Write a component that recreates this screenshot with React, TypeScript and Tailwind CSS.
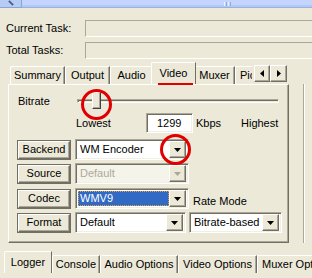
import React from "react";

const raised =
  "border border-t-white border-l-white border-r-[#716f64] border-b-[#716f64] shadow-[inset_-1px_-1px_0_#aca899]";
const sunken =
  "border border-t-[#aca899] border-l-[#aca899] border-r-white border-b-white shadow-[inset_1px_1px_0_#716f64,inset_-1px_-1px_0_#f1efe2]";

function Arrow({ disabled }: { disabled?: boolean }) {
  return (
    <svg width="7" height="4" viewBox="0 0 7 4">
      <polygon points="0,0 7,0 3.5,4" fill={disabled ? "#aca899" : "#000"} />
    </svg>
  );
}

function Combo({
  text,
  w,
  disabled,
  selected,
}: {
  text: string;
  w: string;
  disabled?: boolean;
  selected?: boolean;
}) {
  return (
    <div className={`${sunken} ${w} h-[21px] flex items-center pl-[2px] pr-[2px] ${disabled ? "bg-[#f5f4ea]" : "bg-white"}`}>
      <div className="flex-1 h-[15px] flex items-center min-w-0">
        {selected ? (
          <span className="h-[15px] w-full bg-[#316ac5] text-white flex items-center pl-[2px] outline-1 outline-dotted outline-[#f0a030] -outline-offset-1">
            {text}
          </span>
        ) : (
          <span className={`pl-[2px] whitespace-nowrap ${disabled ? "text-[#aca899]" : "text-black"}`}>{text}</span>
        )}
      </div>
      <div className={`${raised} bg-[#ece9d8] w-[17px] h-[17px] flex items-center justify-center shrink-0`}>
        <Arrow disabled={disabled} />
      </div>
    </div>
  );
}

function Btn({ text }: { text: string }) {
  return (
    <div className="w-[54px] h-[20px] border border-[#716f64] shrink-0">
      <div className={`${raised} w-full h-full bg-[#ece9d8] flex items-center justify-center`}>
        {text}
      </div>
    </div>
  );
}

function Tab({ text, w, selected }: { text: string; w: string; selected?: boolean }) {
  return (
    <div
      className={`${w} shrink-0 bg-[#ece9d8] border-t border-l border-t-white border-l-white border-r border-r-[#716f64] rounded-tl-[2px] flex items-center justify-center overflow-hidden whitespace-nowrap ${
        selected ? "h-[22px] -mx-[2px] relative z-10" : "h-[18px] shadow-[inset_-1px_0_0_#aca899]"
      }`}
    >
      {text}
    </div>
  );
}

export default function App() {
  return (
    <div
      className="w-[312px] h-[278px] bg-[#ece9d8] overflow-hidden relative text-[11px] text-black leading-none"
      style={{ fontFamily: '"Liberation Sans", Arial, sans-serif' }}
    >
      {/* top scrollbar remnant */}
      <div className="h-[8px] flex">
        <div className="w-[22px] h-[8px] bg-[#b6cbf6] border-r border-b border-[#8aa4d8] flex items-start justify-center">
          <div className="w-[6px] h-[2px] mt-[2px] bg-[#4d6185] rotate-45" />
        </div>
        <div className="flex-1 h-[8px] bg-[#c3d5fd] border-b border-[#98b1e4] shadow-[inset_0_-2px_0_#b4c8f6] flex justify-center">
          <div className="ml-[120px] flex gap-[1px] items-end h-full pb-[1px]">
            <div className="w-[1px] h-[4px] bg-[#eef4fe]" />
            <div className="w-[1px] h-[4px] bg-[#8caae6]" />
            <div className="w-[1px] h-[4px] bg-[#eef4fe]" />
            <div className="w-[1px] h-[4px] bg-[#8caae6]" />
          </div>
        </div>
      </div>

      {/* Task rows */}
      <div className="flex items-center mt-[12px] h-[17px]">
        <span className="pl-[6px] w-[90px]">Current Task:</span>
        <div className="w-[240px] h-[17px] border-t border-l border-[#aca899] border-b border-b-white" />
      </div>
      <div className="flex items-center mt-[5px] h-[17px]">
        <span className="pl-[6px] w-[90px]">Total Tasks:</span>
        <div className="w-[240px] h-[17px] border-t border-l border-[#aca899] border-b border-b-white" />
      </div>

      {/* main tab control */}
      <div className="flex">
        <div className="ml-[8px] w-[281px] mt-[4px] relative">
          <div className="flex items-end h-[21px] pl-[2px] relative">
            <Tab text="Summary" w="w-[55px]" />
            <Tab text="Output" w="w-[45px]" />
            <Tab text="Audio" w="w-[43px]" />
            <Tab text="Video" w="w-[45px]" selected />
            <Tab text="Muxer" w="w-[41px]" />
            <div className="h-[18px] w-[17px] border-t border-l border-white pl-[4px] flex items-center overflow-hidden whitespace-nowrap">
              Pic
            </div>
            <div className="absolute right-[2px] top-[2px] flex">
              <div className={`${raised} bg-[#ece9d8] w-[16px] h-[17px] flex items-center justify-center`}>
                <svg width="4" height="7" viewBox="0 0 4 7"><polygon points="4,0 4,7 0,3.5" fill="#000" /></svg>
              </div>
              <div className={`${raised} bg-[#ece9d8] w-[17px] h-[17px] flex items-center justify-center`}>
                <svg width="4" height="7" viewBox="0 0 4 7"><polygon points="0,0 0,7 4,3.5" fill="#000" /></svg>
              </div>
            </div>
            {/* red underline under Video */}
            <div className="absolute left-[150px] top-[20px] w-[35px] h-[2px] bg-[#e00000] z-20" />
          </div>
          <div className={`${raised} h-[159px] flex flex-col`}>
            {/* bitrate row */}
            <div className="flex items-center h-[14px] mt-[9px]">
              <span className="pl-[9px] w-[68px]">Bitrate</span>
              <div className="flex-1 mr-[9px] h-[4px] border-t border-l border-[#aca899] border-b border-r border-b-white border-r-white shadow-[inset_1px_1px_0_#716f64] relative">
                <div className="absolute left-[14px] -top-[8px] w-[9px] h-[17px] bg-[#ece9d8] border border-t-white border-l-white border-r-[#404040] border-b-[#404040] shadow-[inset_-1px_-1px_0_#aca899]" />
              </div>
            </div>
            <div className="flex items-center h-[20px] mt-[5px]">
              <span className="pl-[67px] w-[137px] self-start mt-[5px]">Lowest</span>
              <div className={`${sunken} w-[47px] h-[20px] bg-white flex items-center pl-[10px]`}>1299</div>
              <span className="pl-[3px] w-[48px]">Kbps</span>
              <span>Highest</span>
            </div>
            {/* button rows */}
            <div className="flex flex-col gap-[3px] mt-[6px] pl-[8px]">
              <div className="flex items-center gap-[4px]">
                <Btn text="Backend" />
                <Combo text="WM Encoder" w="w-[114px]" />
              </div>
              <div className="flex items-center gap-[4px]">
                <Btn text="Source" />
                <Combo text="Default" w="w-[114px]" disabled />
              </div>
              <div className="flex items-center gap-[4px] mt-[1px]">
                <Btn text="Codec" />
                <Combo text="WMV9" w="w-[114px]" selected />
                <span className="self-end mb-[2px]">Rate Mode</span>
              </div>
              <div className="flex items-center gap-[4px]">
                <Btn text="Format" />
                <Combo text="Default" w="w-[111px]" />
                <div className="ml-[-1px]">
                  <Combo text="Bitrate-based" w="w-[93px]" />
                </div>
              </div>
            </div>
          </div>
        </div>
        {/* right neighbour panel edge */}
        <div className="ml-[14px] mt-[25px] h-[159px] w-[2px] border-l border-l-[#aca899] border-r border-r-white" />
      </div>

      {/* bottom tabs */}
      <div className="flex items-end mt-[8px] pl-[4px]">
        <Tab text="Logger" w="w-[48px] !mx-0" selected />
        <Tab text="Console" w="w-[48px]" />
        <Tab text="Audio Options" w="w-[78px]" />
        <Tab text="Video Options" w="w-[79px]" />
        <div className="h-[18px] w-[60px] border-t border-l border-white pl-[4px] flex items-center overflow-hidden whitespace-nowrap">
          Muxer Options
        </div>
      </div>

      {/* red annotation circles */}
      <div className="absolute left-[81px] top-[89px] w-[31px] h-[31px] rounded-full border-[3px] border-[#e00000] z-30" />
      <div className="absolute left-[160px] top-[134px] w-[31px] h-[31px] rounded-full border-[3px] border-[#e00000] z-30" />
    </div>
  );
}
